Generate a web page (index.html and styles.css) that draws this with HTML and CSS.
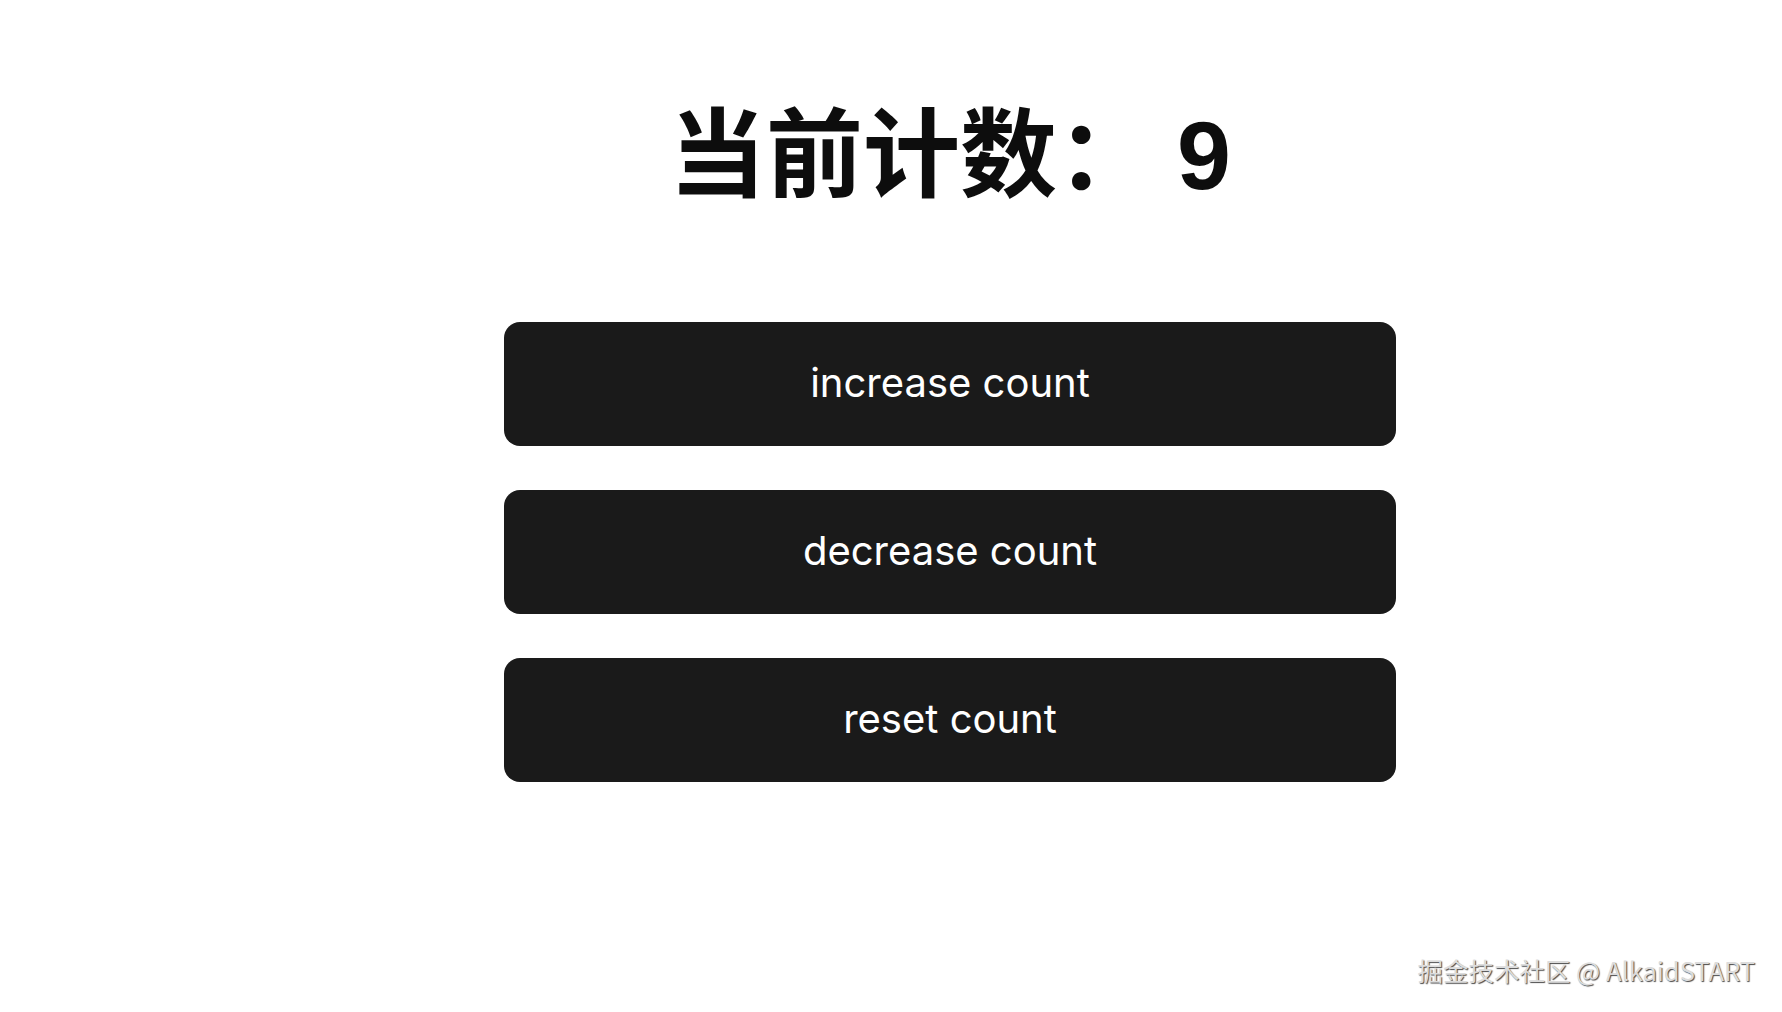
FILE: index.html
```html
<!DOCTYPE html>
<html lang="zh-CN">
<head>
<meta charset="utf-8">
<title>Counter</title>
<link rel="stylesheet" href="styles.css">
</head>
<body>
<main class="app">
  <h1 class="count-title">当前计数： 9</h1>
  <div class="actions">
    <button class="btn" type="button">increase count</button>
    <button class="btn" type="button">decrease count</button>
    <button class="btn" type="button">reset count</button>
  </div>
</main>
<div class="watermark">掘金技术社区 @ AlkaidSTART</div>
</body>
</html>
```

FILE: styles.css
```css
html, body {
  margin: 0;
  padding: 0;
  background: #ffffff;
}

body {
  width: 1782px;
  height: 1012px;
  position: relative;
  overflow: hidden;
  font-family: "Inter", "Liberation Sans", "Noto Sans CJK SC", sans-serif;
}

.app {
  display: flex;
  flex-direction: column;
  align-items: center;
  padding: 98px 0 0 118px;
}

.count-title {
  margin: 0;
  font-family: "Liberation Sans", "Noto Sans CJK SC", sans-serif;
  font-size: 97px;
  font-weight: 700;
  line-height: 116px;
  word-spacing: -4px;
  color: #0d0d0d;
  white-space: pre;
}

.actions {
  display: flex;
  flex-direction: column;
  gap: 44px;
  margin-top: 108px;
}

.btn {
  width: 892px;
  height: 124px;
  border: none;
  border-radius: 16px;
  background: #1a1a1a;
  color: #ffffff;
  font-family: "Inter", "Liberation Sans", sans-serif;
  font-size: 40px;
  font-weight: 400;
  line-height: 1;
  padding: 0 0 2px 0;
  cursor: pointer;
}

.watermark {
  position: absolute;
  right: 27px;
  bottom: 27px;
  font-family: "Noto Sans CJK SC", "Noto Sans", sans-serif;
  font-size: 25.5px;
  line-height: 30px;
  color: #dcdcdc;
  text-shadow: 1px 1px 1px #4a4a4a, -1px -1px 0 #ffffff;
}
```
